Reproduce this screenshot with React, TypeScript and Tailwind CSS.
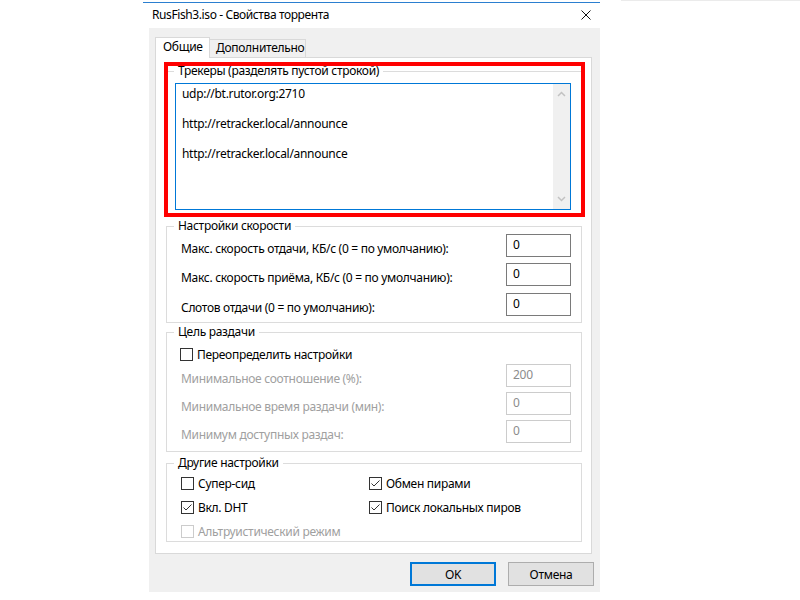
import React from "react";

const F = "font-['Noto_Sans','DejaVu_Sans',sans-serif]";

function CheckBox({ checked, disabled }: { checked?: boolean; disabled?: boolean }) {
  return (
    <div
      className={`w-[13px] h-[13px] shrink-0 border bg-white flex items-center justify-center ${
        disabled ? "border-[#cccccc]" : "border-[#333333]"
      }`}
    >
      {checked && (
        <svg width="11" height="11" viewBox="0 0 11 11">
          <polyline points="1.5,5.5 4,8 9.5,2.5" fill="none" stroke="#333" strokeWidth="1" />
        </svg>
      )}
    </div>
  );
}

function CheckRow({ label, checked, disabled }: { label: string; checked?: boolean; disabled?: boolean }) {
  return (
    <div className="flex items-center h-[15px]">
      <CheckBox checked={checked} disabled={disabled} />
      <span className={`ml-[4px] leading-[15px] whitespace-nowrap ${disabled ? "text-[#a0a0a0]" : "text-black"}`}>
        {label}
      </span>
    </div>
  );
}

function NumRow({ label, value, disabled, mt }: { label: string; value: string; disabled?: boolean; mt: string }) {
  return (
    <div className={`flex justify-between pl-[14px] pr-[10px] ${mt}`}>
      <span className={`pt-[7px] leading-[15px] whitespace-nowrap ${disabled ? "text-[#a0a0a0]" : "text-black"}`}>
        {label}
      </span>
      <div
        className={`w-[65px] h-[23px] border bg-white pl-[6px] pt-[2px] leading-[15px] ${
          disabled ? "border-[#cccccc] text-[#8c8c8c]" : "border-[#7a7a7a] text-black"
        }`}
      >
        {value}
      </div>
    </div>
  );
}

function Group({ title, mt, children, pb }: { title: string; mt: string; pb: string; children: React.ReactNode }) {
  return (
    <fieldset className={`ml-[10px] w-[416px] border border-[#dcdcdc] ${mt} ${pb}`}>
      <legend className="ml-[7px] px-[4px] leading-[14px] text-black">{title}</legend>
      {children}
    </fieldset>
  );
}

export default function App() {
  return (
    <div className={`w-[800px] h-[600px] bg-white flex flex-col text-[12px] tracking-[-0.3px] ${F}`}>
      <div className="h-[2px]">
        <div className="ml-[621px] h-px bg-[#ebebeb]" />
      </div>
      <div className="ml-[143px] w-[457px] h-px bg-[#2b7fd0]" />
      <div className="ml-[149px] w-[451px] flex flex-col">
        {/* title bar */}
        <div className="h-[25px] flex items-start justify-between">
          <span className="pl-[3px] pt-[4px] leading-[15px] text-black tracking-[-0.4px]">RusFish3.iso - Свойства торрента</span>
          <div className="mr-[9px] mt-[7px]">
            <svg width="10" height="10" viewBox="0 0 10 10">
              <path d="M0.5 0.5 L9.5 9.5 M9.5 0.5 L0.5 9.5" stroke="#111" strokeWidth="1" />
            </svg>
          </div>
        </div>
        {/* client */}
        <div className="h-[564px] bg-[#f0f0f0] flex flex-col pt-[9px]">
          {/* tabs */}
          <div className="flex items-end h-[20px] ml-[6px]">
            <div className="relative z-10 w-[55px] h-[21px] -mb-px border border-b-0 border-[#d9d9d9] bg-white pl-[7px] pt-[1px] leading-[15px]">
              Общие
            </div>
            <div className="w-[97px] h-[18px] -ml-px border border-b-0 border-[#d9d9d9] bg-[#f0f0f0] pl-[6px] leading-[15px]">
              Дополнительно
            </div>
          </div>
          {/* panel */}
          <div className="relative ml-[6px] w-[437px] h-[497px] border border-[#d9d9d9] bg-white flex flex-col">
            <Group title="Трекеры (разделять пустой строкой)" mt="mt-[6px]" pb="pb-[5px]">
              <div className="ml-[8px] mt-[5px] w-[396px] h-[127px] border border-[#0078d7] flex">
                <div className="flex-1 pl-[6px] pt-[2px] leading-[15px] text-black">
                  <div>udp://bt.rutor.org:2710</div>
                  <div>&nbsp;</div>
                  <div>http://retracker.local/announce</div>
                  <div>&nbsp;</div>
                  <div>http://retracker.local/announce</div>
                </div>
                <div className="w-[17px] bg-[#f0f0f0] flex flex-col justify-between items-center py-[7px]">
                  <svg width="9" height="6" viewBox="0 0 9 6">
                    <polyline points="1,5 4.5,1.5 8,5" fill="none" stroke="#c2c2c2" strokeWidth="1.5" />
                  </svg>
                  <svg width="9" height="6" viewBox="0 0 9 6">
                    <polyline points="1,1 4.5,4.5 8,1" fill="none" stroke="#c2c2c2" strokeWidth="1.5" />
                  </svg>
                </div>
              </div>
            </Group>

            <Group title="Настройки скорости" mt="mt-[3px]" pb="pb-[6px]">
              <NumRow label="Макс. скорость отдачи, КБ/с (0 = по умолчанию):" value="0" mt="mt-[1px]" />
              <NumRow label="Макс. скорость приёма, КБ/с (0 = по умолчанию):" value="0" mt="mt-[6px]" />
              <NumRow label="Слотов отдачи (0 = по умолчанию):" value="0" mt="mt-[7px]" />
            </Group>

            <Group title="Цель раздачи" mt="mt-[2px]" pb="pb-[8px]">
              <div className="ml-[13px] mt-[8px]">
                <CheckRow label="Переопределить настройки" />
              </div>
              <NumRow label="Минимальное соотношение (%):" value="200" disabled mt="mt-[2px]" />
              <NumRow label="Минимальное время раздачи (мин):" value="0" disabled mt="mt-[5px]" />
              <NumRow label="Минимум доступных раздач:" value="0" disabled mt="mt-[5px]" />
            </Group>

            <Group title="Другие настройки" mt="mt-[4px]" pb="pb-[2px]">
              <div className="ml-[14px] mt-[6px] grid grid-cols-[188px_1fr] gap-y-[9px]">
                <CheckRow label="Супер-сид" />
                <CheckRow label="Обмен пирами" checked />
                <CheckRow label="Вкл. DHT" checked />
                <CheckRow label="Поиск локальных пиров" checked />
                <CheckRow label="Альтруистический режим" disabled />
              </div>
            </Group>

            {/* annotation overlay */}
            <div className="absolute left-[8px] top-[4px] w-[421px] h-[155px] border-4 border-[#ff0000] pointer-events-none" />
          </div>
          {/* buttons */}
          <div className="flex mt-[8px] ml-[261px] gap-[12px]">
            <div className="w-[86px] h-[24px] border-2 border-[#0078d7] bg-[#e1e1e1] flex items-center justify-center leading-[15px] text-black">
              OK
            </div>
            <div className="w-[86px] h-[24px] border border-[#adadad] bg-[#e1e1e1] flex items-center justify-center leading-[15px] text-black">
              Отмена
            </div>
          </div>
        </div>
      </div>
    </div>
  );
}
